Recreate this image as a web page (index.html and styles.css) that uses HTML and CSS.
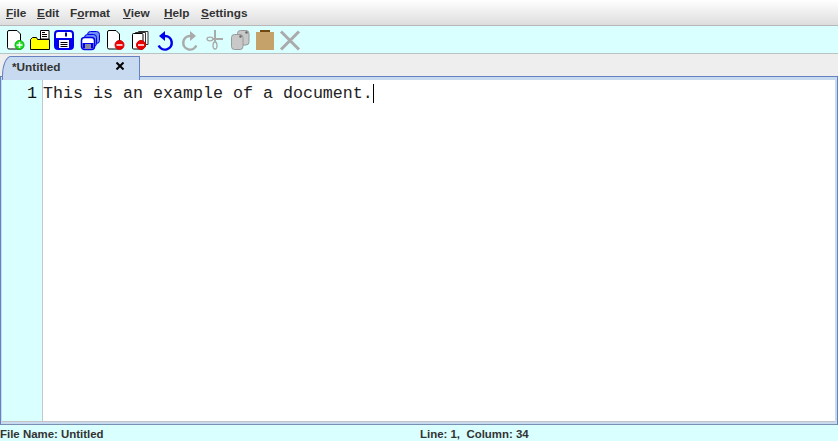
FILE: index.html
```html
<!DOCTYPE html>
<html lang="en">
<head>
  <meta charset="UTF-8" />
  <title>Untitled</title>
  <link rel="stylesheet" href="styles.css">
</head>
<body>

  <nav class="menubar">
    <span class="menu"><u>F</u>ile</span>
    <span class="menu"><u>E</u>dit</span>
    <span class="menu">F<u>o</u>rmat</span>
    <span class="menu"><u>V</u>iew</span>
    <span class="menu"><u>H</u>elp</span>
    <span class="menu"><u>S</u>ettings</span>
  </nav>

  <div class="toolbar">
    <!-- new -->
    <svg class="tool" width="24" height="24" viewBox="0 0 24 24">
      <path d="M7 2.500h8l3.500 3.500v13.500a1.500 1.500 0 0 1-1.500 1.500H7a1.500 1.500 0 0 1-1.500-1.500V4a1.500 1.500 0 0 1 1.500-1.500z" fill="#fff" stroke="#000"/>
      <circle cx="17.500" cy="17" r="4.500" fill="#22e022" stroke="#00b000"/>
      <path d="M14.500 17h6M17.500 14v6" stroke="#fff" stroke-width="1.500"/>
    </svg>
    <!-- open -->
    <svg class="tool" width="24" height="24" viewBox="0 0 24 24">
      <path d="M13.500 11V2.500h8.500V11z" fill="#fff" stroke="#000"/>
      <path d="M15 4.500h3M15 6.500h5M15 8.500h5" stroke="#000"/>
      <path d="M3.500 21.500v-10l2-2h4l1 2h12v10z" fill="#ffff00" stroke="#000"/>
    </svg>
    <!-- save -->
    <svg class="tool" width="24" height="24" viewBox="0 0 24 24">
      <rect x="3" y="3" width="18" height="18" rx="3" fill="#fff" stroke="#0000ee" stroke-width="2"/>
      <path d="M4 10h16v10H4z" fill="#0000ee"/>
      <path d="M13 4.500h2v4h-2z" fill="#0000aa"/>
      <path d="M7 12h10v8H7z" fill="#fff"/>
      <path d="M8.500 14.500h7M8.500 16.500h7M8.500 18.500h7" stroke="#000"/>
    </svg>
    <!-- save all -->
    <svg class="tool" width="24" height="24" viewBox="0 0 24 24">
      <rect x="10.500" y="3.500" width="12" height="12" rx="3" fill="#6f90f0" stroke="#0000ee"/>
      <rect x="7.500" y="6.500" width="12" height="12" rx="3" fill="#6f90f0" stroke="#0000ee"/>
      <rect x="4.500" y="9.500" width="13" height="12" rx="3" fill="#fff" stroke="#0000ee" stroke-width="1.500"/>
      <path d="M5.500 15h11v5.500h-11z" fill="#0000ee"/>
      <path d="M8 16h6v5H8z" fill="#8a8a9a"/>
    </svg>
    <!-- close -->
    <svg class="tool" width="24" height="24" viewBox="0 0 24 24">
      <path d="M7 2.500h7l3.500 3.500v13.500a1.500 1.500 0 0 1-1.500 1.500H7a1.500 1.500 0 0 1-1.500-1.500V4a1.500 1.500 0 0 1 1.500-1.500z" fill="#fff" stroke="#000"/>
      <circle cx="17.500" cy="17" r="4.500" fill="#ee0000" stroke="#d00000"/>
      <path d="M14.500 17h6" stroke="#fff" stroke-width="1.500"/>
    </svg>
    <!-- close all -->
    <svg class="tool" width="24" height="24" viewBox="0 0 24 24">
      <path d="M11.500 3.500h9.500v13h-9.500z" fill="#fff" stroke="#333"/>
      <path d="M8.500 4.500h10v14h-10z" fill="#fff" stroke="#333"/>
      <path d="M5.500 6.500a1 1 0 0 1 1-1h8.500a1 1 0 0 1 1 1V20a1 1 0 0 1-1 1H6.500a1 1 0 0 1-1-1z" fill="#fff" stroke="#000"/>
      <circle cx="14" cy="17" r="4.500" fill="#ee0000" stroke="#d00000"/>
      <path d="M11 17h6" stroke="#fff" stroke-width="1.500"/>
    </svg>
    <!-- undo -->
    <svg class="tool" width="24" height="24" viewBox="0 0 24 24" fill="none">
      <path d="M12 8h1a6.800 6.800 0 1 1-6.300 9.500" stroke="#0000ee" stroke-width="2.500"/>
      <path d="M13 3v10l-6-5z" fill="#0000ee"/>
    </svg>
    <!-- redo -->
    <svg class="tool" width="24" height="24" viewBox="0 0 24 24" fill="none">
      <path d="M14 8h-1a6.800 6.800 0 1 0 6.300 9.500" stroke="#aaa" stroke-width="2.500"/>
      <path d="M13 3v10l6-5z" fill="#aaa"/>
    </svg>
    <!-- cut -->
    <svg class="tool" width="24" height="24" viewBox="0 0 24 24" fill="none" stroke="#aaa">
      <path d="M13 2v12" stroke-width="2"/>
      <path d="M11 11h10" stroke-width="2"/>
      <ellipse cx="8" cy="11" rx="3" ry="1.800" stroke-width="1.300"/>
      <ellipse cx="13" cy="17.500" rx="2" ry="3.500" stroke-width="1.300"/>
    </svg>
    <!-- copy -->
    <svg class="tool" width="24" height="24" viewBox="0 0 24 24">
      <rect x="10.500" y="2.500" width="11.500" height="14.500" rx="3" fill="#c8c8c8" stroke="#999"/>
      <rect x="4.500" y="6.500" width="11.500" height="15" rx="3" fill="#c8c8c8" stroke="#999"/>
      <circle cx="13.500" cy="8.500" r="1.200" fill="#666"/>
      <circle cx="19.500" cy="4.500" r="1.200" fill="#666"/>
    </svg>
    <!-- paste -->
    <svg class="tool" width="24" height="24" viewBox="0 0 24 24">
      <rect x="4" y="4" width="18" height="18" fill="#c4a26a"/>
      <rect x="8" y="2" width="10" height="2" fill="#6e4a10"/>
    </svg>
    <!-- delete -->
    <svg class="tool" width="24" height="24" viewBox="0 0 24 24">
      <path d="M4 3.500l18 18M22 3.500l-18 18" stroke="#aaa" stroke-width="3" fill="none"/>
    </svg>
  </div>

  <div class="tabstrip">
    <div class="tab">
      <span class="tab-title">*Untitled</span>
      <svg class="tab-close" width="8" height="8" viewBox="0 0 8 8">
        <path d="M.5 .5l7 7M7.500 .5l-7 7" stroke="#000" stroke-width="2" fill="none"/>
      </svg>
    </div>
  </div>

  <main class="editor-frame">
    <div class="editor">
      <div class="gutter">1</div>
      <div class="text">This is an example of a document.<span class="caret"></span></div>
    </div>
  </main>

  <footer class="statusbar">
    <span class="status-file">File Name: Untitled</span>
    <span class="status-pos">Line: 1,&nbsp; Column: 34</span>
  </footer>

</body>
</html>
```

FILE: styles.css
```css
html, body {
  height: 100%;
}
body {
  margin: 0;
  display: flex;
  flex-direction: column;
  overflow: hidden;
  font-family: "Liberation Sans", Arial, sans-serif;
  font-size: 11.8px;
  font-weight: bold;
  color: #333;
  background: #eeeeee;
}
.menubar {
  height: 26px;
  display: grid;
  grid-template-columns: 31px 33px 53px 41px 37px auto;
  align-items: center;
  padding-left: 6px;
  background: linear-gradient(#ffffff, #dddddd);
  border-bottom: 1px solid #b8b8b8;
  box-sizing: border-box;
  flex: none;
}
.toolbar {
  height: 28px;
  display: flex;
  align-items: flex-start;
  gap: 1px;
  padding: 2px 0 0 2px;
  background: #d9ffff;
  border-bottom: 1px solid #b8c4c4;
  box-sizing: border-box;
  flex: none;
}
.tool {
  display: block;
  flex: none;
}
.tabstrip {
  height: 22px;
  padding: 2px 0 0 2px;
  background: #eeeeee;
  box-sizing: border-box;
  flex: none;
  display: flex;
  align-items: flex-start;
}
.tab {
  width: 138px;
  height: 24px;
  display: flex;
  align-items: flex-start;
  justify-content: space-between;
  padding: 3px 15px 0 9px;
  background: #c8daf0;
  border: 1px solid #6382bf;
  border-bottom: none;
  border-top-left-radius: 9px 20px;
  box-sizing: border-box;
  position: relative;
  z-index: 1;
}
.tab-close {
  display: block;
  margin-top: 2px;
}
.editor-frame {
  flex: 1;
  min-height: 0;
  border: 1px solid #6382bf;
  border-bottom-color: #7a90b0;
  padding: 3px 2px 2px 1px;
  background: #c8daf0;
  box-sizing: border-box;
  display: flex;
}
.editor {
  flex: 1;
  display: flex;
  background: #ffffff;
  border-bottom: 1px solid #c4c4c4;
}
.gutter {
  width: 35px;
  padding: 4px 5px 0 0;
  background: #d9ffff;
  border-right: 1px solid #c0c8cc;
  text-align: right;
  font: normal 16.67px/20px "Liberation Mono", "Courier New", monospace;
  color: #111;
}
.text {
  padding: 4px 0 0 0;
  font: normal 16.67px/20px "Liberation Mono", "Courier New", monospace;
  color: #222;
  white-space: pre;
}
.caret {
  display: inline-block;
  width: 1px;
  height: 19px;
  background: #000;
  vertical-align: top;
}
.statusbar {
  height: 16px;
  flex: none;
  display: flex;
  align-items: center;
  padding-top: 2px;
  box-sizing: border-box;
  background: #d9ffff;
  color: #333;
  font-size: 11.45px;
}
.status-file {
  width: 420px;
}
```
